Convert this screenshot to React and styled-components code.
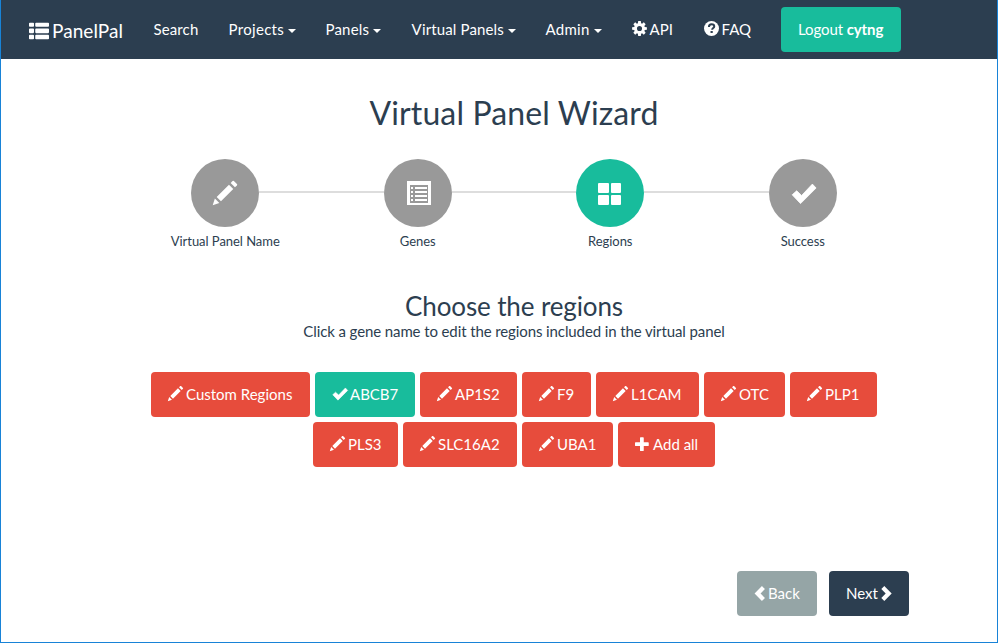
import React from "react";
import styled, { createGlobalStyle } from "styled-components";

const colors = {
  navy: "#2c3e50",
  teal: "#18bc9c",
  red: "#e74c3c",
  grey: "#95a5a6",
  step: "#999999",
  line: "#dddddd",
  frame: "#1883d7",
};

const GlobalStyle = createGlobalStyle`
  * { box-sizing: border-box; }
  body {
    margin: 0;
    background: #fff;
    color: ${colors.navy};
    font: 15px/21px Lato, "Liberation Sans", sans-serif;
  }
`;

const Page = styled.div`
  width: 998px;
  height: 643px;
  display: flex;
  flex-direction: column;
  border: 1px solid ${colors.frame};
  border-top: 0;
`;

const Navbar = styled.nav`
  display: flex;
  align-items: center;
  height: 59px;
  flex: none;
  padding-left: 28px;
  background: ${colors.navy};
  color: #fff;
`;

const Brand = styled.a`
  display: flex;
  align-items: center;
  gap: 3px;
  width: 109.6px;
  padding-top: 2px;
  font-size: 19px;
  letter-spacing: 0.06px;
`;

const NavItem = styled.a`
  display: flex;
  align-items: center;
  width: ${(p) => p.$width}px;
  padding-left: 15px;
  white-space: nowrap;
  letter-spacing: ${(p) => p.$spacing || 0}px;
`;

const Caret = styled.span`
  margin: 2px 0 0 4px;
  border: 4px solid transparent;
  border-top-color: #fff;
  border-bottom: 0;
`;

const Glyph = styled.svg`
  display: block;
  flex: none;
  width: ${(p) => p.$width}px;
  height: ${(p) => p.$size}px;
  margin-right: ${(p) => p.$gap || 0}px;
  margin-bottom: ${(p) => p.$lift || 0}px;
  overflow: visible;
  fill: currentColor;
`;

const Button = styled.button`
  display: flex;
  align-items: center;
  width: ${(p) => p.$width}px;
  height: 45px;
  padding: 0 0 0 17px;
  border: 0;
  border-radius: 4px;
  background: ${(p) => colors[p.$tone]};
  color: #fff;
  font: inherit;
  white-space: nowrap;
  letter-spacing: ${(p) => p.$spacing || 0}px;
`;

const Main = styled.main`
  display: flex;
  flex-direction: column;
  align-items: center;
  width: 770px;
  margin-left: 128px;
`;

const Title = styled.h1`
  margin: 36px 0 28px;
  font-size: 32px;
  font-weight: 400;
  line-height: 36px;
  letter-spacing: 0.12px;
`;

const Steps = styled.div`
  display: grid;
  grid-template-columns: repeat(4, 1fr);
  width: 100%;
`;

const StepTrack = styled.div`
  display: flex;
  align-items: center;
`;

const Connector = styled.span`
  flex: 1;
  height: 2px;
  margin-bottom: 2px;
  background: ${(p) => (p.$hidden ? "transparent" : colors.line)};
`;

const Circle = styled.div`
  display: flex;
  align-items: center;
  justify-content: center;
  width: 68px;
  height: 68px;
  border-radius: 50%;
  background: ${(p) => (p.$active ? colors.teal : colors.step)};
  color: #fff;
`;

const StepLabel = styled.div`
  margin-top: 5px;
  font-size: 13px;
  line-height: 18px;
  letter-spacing: -0.04px;
  text-align: center;
`;

const Heading = styled.h2`
  margin: 42px 0 0;
  font-size: 26px;
  font-weight: 400;
  line-height: 28px;
  letter-spacing: -0.12px;
`;

const Hint = styled.p`
  margin: 1px 0 0;
  letter-spacing: -0.105px;
`;

const GeneList = styled.div`
  display: flex;
  flex-wrap: wrap;
  justify-content: center;
  gap: 5px;
  width: 740px;
  margin-top: 30px;
`;

const Pager = styled.div`
  display: flex;
  gap: 12px;
  margin: 104px 0 0 736px;
`;

const ButtonText = styled.span`
  margin-right: ${(p) => p.$after || 0}px;
`;

const flip = "matrix(1 0 0 -1 0 1200)";

const gearPath = (() => {
  const points = [];
  for (let i = 0; i < 8; i += 1) {
    [[-17, 440], [-10, 600], [10, 600], [17, 440]].forEach(([deg, radius]) => {
      const a = ((i * 45 + deg) * Math.PI) / 180;
      points.push(`${600 + radius * Math.sin(a)} ${600 - radius * Math.cos(a)}`);
    });
  }
  return `M${points.join("L")}ZM600 395a205 205 0 1 0 0 410a205 205 0 1 0 0 -410Z`;
})();

const shapes = {
  pencil: (
    <path
      transform={flip}
      d="M1011 1210q19 0 33 -13l153 -153q13 -14 13 -33t-13 -33l-99 -92l-214 214l95 96q13 14 32 14zM1013 800l-615 -614l-214 214l614 614zM317 96l-333 -112l110 335z"
    />
  ),
  check: (
    <path
      d="M60 690L285 490L530 725L1070 155L1255 350L475 1130Z"
      stroke="currentColor"
      strokeWidth="40"
      strokeLinejoin="round"
    />
  ),
  plus: (
    <path
      transform={flip}
      d="M450 1100h200q21 0 35.5 -14.5t14.5 -35.5v-350h350q21 0 35.5 -14.5t14.5 -35.5v-200q0 -21 -14.5 -35.5t-35.5 -14.5h-350v-350q0 -21 -14.5 -35.5t-35.5 -14.5h-200q-21 0 -35.5 14.5t-14.5 35.5v350h-350q-21 0 -35.5 14.5t-14.5 35.5v200q0 21 14.5 35.5t35.5 14.5h350v350q0 21 14.5 35.5t35.5 14.5z"
    />
  ),
  listAlt: (
    <path
      transform="translate(50 0)"
      fillRule="evenodd"
      d="M0 0H1200V1200H0ZM150 200V1100H1050V200ZM200 300H300V400H200ZM400 300H1000V400H400ZM200 500H300V600H200ZM400 500H1000V600H400ZM200 700H300V800H200ZM400 700H1000V800H400ZM200 900H300V1000H200ZM400 900H1000V1000H400Z"
    />
  ),
  grid: (
    <path d="M50 100H500q50 0 50 50V550q0 50 -50 50H50q-50 0 -50 -50V150q0 -50 50 -50ZM700 100H1100q50 0 50 50V550q0 50 -50 50H700q-50 0 -50 -50V150q0 -50 50 -50ZM50 700H500q50 0 50 50V1150q0 50 -50 50H50q-50 0 -50 -50V750q0 -50 50 -50ZM700 700H1100q50 0 50 50V1150q0 50 -50 50H700q-50 0 -50 -50V750q0 -50 50 -50Z" />
  ),
  thList: (
    <path d="M50 100H250q50 0 50 50V300q0 50 -50 50H50q-50 0 -50 -50V150q0 -50 50 -50ZM425 100H1150q50 0 50 50V300q0 50 -50 50H425q-50 0 -50 -50V150q0 -50 50 -50ZM50 450H250q50 0 50 50V680q0 50 -50 50H50q-50 0 -50 -50V500q0 -50 50 -50ZM425 450H1150q50 0 50 50V680q0 50 -50 50H425q-50 0 -50 -50V500q0 -50 50 -50ZM50 830H250q50 0 50 50V1050q0 50 -50 50H50q-50 0 -50 -50V880q0 -50 50 -50ZM425 830H1150q50 0 50 50V1050q0 50 -50 50H425q-50 0 -50 -50V880q0 -50 50 -50Z" />
  ),
  cog: <path fillRule="evenodd" d={gearPath} />,
  question: (
    <g>
      <circle cx="600" cy="600" r="600" />
      <path
        d="M395 480C395 330 475 265 605 265C735 265 820 335 820 445C820 560 650 570 650 700"
        fill="none"
        stroke={colors.navy}
        strokeWidth="160"
      />
      <path d="M520 800H700V960H520Z" fill={colors.navy} />
    </g>
  ),
  left: <path transform={flip} d="M185 599l592 -592l240 240l-353 353l353 353l-240 240z" />,
  right: <path transform={flip} d="M1015 599l-592 -592l-240 240l353 353l-353 353l240 240z" />,
};

function Icon({ name, size = 15, width = size, gap, lift }) {
  return (
    <Glyph
      viewBox={`${(1200 - (1200 * width) / size) / 2} 0 ${(1200 * width) / size} 1200`}
      $size={size}
      $width={width}
      $gap={gap}
      $lift={lift}
      aria-hidden="true"
    >
      {shapes[name]}
    </Glyph>
  );
}

const menus = [
  { label: "Search", width: 75, spacing: 0.1 },
  { label: "Projects", width: 97, spacing: 0.3, caret: true },
  { label: "Panels", width: 86, spacing: 0.15, caret: true },
  { label: "Virtual Panels", width: 134, spacing: 0.14, caret: true },
  { label: "Admin", width: 86, spacing: 0.25, caret: true },
  { label: "API", width: 72, icon: "cog" },
  { label: "FAQ", width: 77.4, icon: "question" },
];

const steps = [
  { label: "Virtual Panel Name", icon: "pencil" },
  { label: "Genes", icon: "listAlt" },
  { label: "Regions", icon: "grid", active: true },
  { label: "Success", icon: "check" },
];

const genes = [
  { label: "Custom Regions", width: 159 },
  { label: "ABCB7", width: 100, icon: "check", tone: "teal" },
  { label: "AP1S2", width: 97 },
  { label: "F9", width: 69 },
  { label: "L1CAM", width: 103 },
  { label: "OTC", width: 81 },
  { label: "PLP1", width: 87 },
  { label: "PLS3", width: 85 },
  { label: "SLC16A2", width: 114 },
  { label: "UBA1", width: 91 },
  { label: "Add all", width: 97, icon: "plus" },
];

export default function App() {
  return (
    <Page>
      <GlobalStyle />
      <Navbar>
        <Brand>
          <Icon name="thList" size={20} />
          PanelPal
        </Brand>
        {menus.map((m) => (
          <NavItem key={m.label} $width={m.width} $spacing={m.spacing}>
            {m.icon && <Icon name={m.icon} gap={3} lift={2} />}
            {m.label}
            {m.caret && <Caret />}
          </NavItem>
        ))}
        <NavItem as="div" $width={135}>
          <Button $tone="teal" $width={120} $spacing={-0.1}>
            <ButtonText>
              Logout <b>cytng</b>
            </ButtonText>
          </Button>
        </NavItem>
      </Navbar>
      <Main>
        <Title>Virtual Panel Wizard</Title>
        <Steps>
          {steps.map((s, i) => (
            <div key={s.label}>
              <StepTrack>
                <Connector $hidden={i === 0} />
                <Circle $active={s.active}>
                  <Icon name={s.icon} size={24} />
                </Circle>
                <Connector $hidden={i === steps.length - 1} />
              </StepTrack>
              <StepLabel>{s.label}</StepLabel>
            </div>
          ))}
        </Steps>
        <Heading>Choose the regions</Heading>
        <Hint>Click a gene name to edit the regions included in the virtual panel</Hint>
        <GeneList>
          {genes.map((g) => (
            <Button key={g.label} $tone={g.tone || "red"} $width={g.width}>
              <Icon name={g.icon || "pencil"} gap={3} lift={2} />
              {g.label}
            </Button>
          ))}
        </GeneList>
      </Main>
      <Pager>
        <Button $tone="grey" $width={80}>
          <Icon name="left" width={11.5} gap={2.5} lift={1} />
          Back
        </Button>
        <Button $tone="navy" $width={80}>
          <ButtonText $after={3}>Next</ButtonText>
          <Icon name="right" width={11} lift={1} />
        </Button>
      </Pager>
    </Page>
  );
}
